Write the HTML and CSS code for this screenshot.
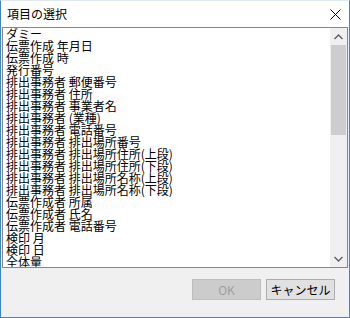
FILE: index.html
```html
<!DOCTYPE html>
<html lang="ja">
<head>
    <meta charset="UTF-8">
    <title>項目の選択</title>
    <link rel="stylesheet" href="styles.css">
</head>
<body>
    <div class="window">
        <div class="titlebar">
            <span class="title">項目の選択</span>
            <span class="close">
                <svg width="11" height="11" viewBox="0 0 11 11">
                    <path d="M0.5 0.5 L10.5 10.5 M10.5 0.5 L0.5 10.5" stroke="#000" stroke-width="1" fill="none"/>
                </svg>
            </span>
        </div>

        <div class="content">
            <div class="listbox">
                <ul class="items">
                    <li>ダミー</li>
                    <li>伝票作成 年月日</li>
                    <li>伝票作成 時</li>
                    <li>発行番号</li>
                    <li>排出事務者 郵便番号</li>
                    <li>排出事務者 住所</li>
                    <li>排出事務者 事業者名</li>
                    <li>排出事務者 (業種)</li>
                    <li>排出事務者 電話番号</li>
                    <li>排出事務者 排出場所番号</li>
                    <li>排出事務者 排出場所住所(上段)</li>
                    <li>排出事務者 排出場所住所(下段)</li>
                    <li>排出事務者 排出場所名称(上段)</li>
                    <li>排出事務者 排出場所名称(下段)</li>
                    <li>伝票作成者 所属</li>
                    <li>伝票作成者 氏名</li>
                    <li>伝票作成者 電話番号</li>
                    <li>検印 月</li>
                    <li>検印 日</li>
                    <li>全体量</li>
                </ul>
                <div class="scrollbar">
                    <div class="arrow">
                        <svg width="9" height="6" viewBox="0 0 9 6">
                            <path d="M0.5 5 L4.5 1 L8.5 5" stroke="#606060" stroke-width="1.4" fill="none"/>
                        </svg>
                    </div>
                    <div class="track">
                        <div class="thumb"></div>
                    </div>
                    <div class="arrow">
                        <svg width="9" height="6" viewBox="0 0 9 6">
                            <path d="M0.5 1 L4.5 5 L8.5 1" stroke="#606060" stroke-width="1.4" fill="none"/>
                        </svg>
                    </div>
                </div>
            </div>

            <div class="buttons">
                <button class="btn" disabled>OK</button>
                <button class="btn">キャンセル</button>
            </div>
        </div>
    </div>
</body>
</html>
```

FILE: styles.css
```css
* {
    margin: 0;
    padding: 0;
    box-sizing: border-box;
}

body {
    font-family: "Noto Sans CJK JP", "Noto Sans", sans-serif;
    font-size: 12px;
    color: #000;
    background: #fff;
}

.window {
    width: 350px;
    height: 318px;
    border: 1px solid #3a86d4;
    border-top-color: #dfe9f5;
    display: flex;
    flex-direction: column;
    background: #f0f0f0;
}

.titlebar {
    height: 26px;
    background: #fff;
    display: flex;
    align-items: center;
    justify-content: space-between;
    padding: 0 7px 0 6px;
}

.title {
    font-size: 12px;
    line-height: 14px;
}

.close {
    display: flex;
    width: 11px;
    height: 11px;
    margin-right: 1px;
}

.content {
    flex: 1;
    display: flex;
    flex-direction: column;
    padding: 0 1px 0 1px;
}

.listbox {
    height: 241px;
    border: 1px solid #828790;
    background: #fff;
    display: flex;
}

.items {
    flex: 1;
    list-style: none;
    overflow: hidden;
    padding: 0 0 0 3px;
}

.items li {
    height: 12px;
    line-height: 12px;
    font-size: 12px;
    white-space: nowrap;
}

.scrollbar {
    width: 17px;
    background: #f0f0f0;
    display: flex;
    flex-direction: column;
}

.arrow {
    height: 17px;
    display: flex;
    align-items: center;
    justify-content: center;
}

.track {
    flex: 1;
}

.thumb {
    height: 90px;
    margin: 0 1px;
    background: #cdcdcd;
}

.buttons {
    display: flex;
    justify-content: flex-end;
    gap: 5px;
    padding: 11px 13px 0 0;
}

.btn {
    width: 69px;
    height: 21px;
    font-family: "Noto Sans CJK JP", "Noto Sans", sans-serif;
    font-size: 12px;
    line-height: 12px;
    background: #e1e1e1;
    border: 1px solid #adadad;
    color: #000;
}

.btn:disabled {
    background: #cccccc;
    border-color: #bfbfbf;
    color: #a0a0a0;
}
```
